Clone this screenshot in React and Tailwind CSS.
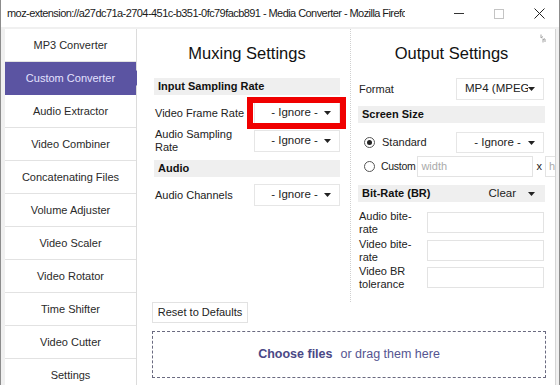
import React from "react";

const F = { fontFamily: '"Liberation Sans", Arial, sans-serif' };

function Arrow() {
  return (
    <svg width="7" height="4" viewBox="0 0 7 4" className="shrink-0">
      <path d="M0 0 L7 0 L3.5 4 Z" fill="#222" />
    </svg>
  );
}

function Select({ text, w = "w-[86px]", h = "h-[22px]", pl = "pl-[10px]" }) {
  return (
    <div className={`${w} ${h} bg-white border border-[#e6e6e6] flex items-center ${pl} pr-[8px] shrink-0`}>
      <span className="flex-1 text-center text-[11.5px] text-[#222] whitespace-nowrap overflow-hidden">{text}</span>
      <Arrow />
    </div>
  );
}

function Header({ children, right }) {
  return (
    <div className="h-[17px] bg-[#efefef] flex items-center pl-[4px] pr-[10px]">
      <span className="font-bold text-[11px] text-[#111] flex-1">{children}</span>
      {right}
    </div>
  );
}

function Input({ w, placeholder }) {
  return (
    <div className={`${w} h-[21px] bg-white border border-[#e3e3e3] flex items-center pl-[3px] text-[11px] text-[#aaa] shrink-0 overflow-hidden whitespace-nowrap`}>
      {placeholder}
    </div>
  );
}

function TwoLine({ a, b, w = "w-[69px]" }) {
  return (
    <div className={`${w} pl-[1px] text-[11px] leading-[12.5px] text-[#222] shrink-0`}>
      {a}
      <br />
      {b}
    </div>
  );
}

export default function App() {
  const items = [
    "MP3 Converter",
    "Custom Converter",
    "Audio Extractor",
    "Video Combiner",
    "Concatenating Files",
    "Volume Adjuster",
    "Video Scaler",
    "Video Rotator",
    "Time Shifter",
    "Video Cutter",
    "Settings",
  ];
  return (
    <div className="w-[560px] h-[385px] overflow-hidden bg-[#f0f0f0] flex flex-col border-l border-r border-[#8c8c8c]" style={F}>
      {/* Title bar */}
      <div className="h-[27px] bg-white flex items-center shrink-0">
        <div className="w-[404px] pl-[6px] overflow-hidden whitespace-nowrap text-[11px] tracking-[-0.56px] text-[#1a1a1a]">
          moz-extension://a27dc71a-2704-451c-b351-0fc79facb891 - Media Converter - Mozilla Firefox
        </div>
        <div className="flex-1 flex items-center justify-end">
          <div className="w-[40px] flex justify-center">
            <div className="w-[10px] h-[1px] bg-[#333]" />
          </div>
          <div className="w-[40px] flex justify-center">
            <div className="w-[10px] h-[10px] border border-[#c4c4c4]" />
          </div>
          <div className="w-[40px] flex justify-center">
            <svg width="11" height="11" viewBox="0 0 11 11">
              <path d="M0.5 0.5 L10.5 10.5 M10.5 0.5 L0.5 10.5" stroke="#222" strokeWidth="1" />
            </svg>
          </div>
        </div>
      </div>

      {/* Body */}
      <div className="flex flex-1 min-h-0 pt-[2px] pl-[4px] pr-[3px]">
        {/* Sidebar */}
        <div className="w-[132px] bg-white border-r border-[#dcdcdc] flex flex-col shrink-0">
          {items.map((it, i) =>
            i === 1 ? (
              <div key={it} className="relative h-[33px] bg-[#5b54a2] flex items-center justify-center shrink-0">
                <span className="text-[11px] text-[#e4e2ff]">{it}</span>
                <svg width="8" height="16" viewBox="0 0 8 16" className="absolute right-[-8px] top-[8px]">
                  <path d="M0 0 L7 8 L0 16 Z" fill="#5b54a2" />
                </svg>
              </div>
            ) : (
              <div key={it} className="h-[33px] border-b border-[#e2e2e2] flex items-center justify-center shrink-0">
                <span className="text-[11px] text-[#2a2a2a]">{it}</span>
              </div>
            )
          )}
        </div>

        {/* Main */}
        <div className="flex-1 min-w-0 bg-white border-r border-[#d4d4d4] flex flex-col relative">
          <svg width="6" height="9" viewBox="0 0 6 9" className="absolute right-[9px] top-[5px]">
            <path d="M1 0.5 L1 4 M1 4 L3 2.5 M3 4.5 L3 8.5 M3 6 L5 4.5 M5 5 L5 8" stroke="#9a9a9a" strokeWidth="0.9" fill="none" />
          </svg>
          <div className="flex">
            {/* Muxing */}
            <div className="w-[214px] border-r border-dotted border-[#d0d0d0] pl-[17px] pr-[10px] shrink-0">
              <div className="pt-[15px] h-[49px] text-center text-[16.5px] leading-[19px] text-[#111]">Muxing Settings</div>
              <Header>Input Sampling Rate</Header>
              <div className="mt-[7px] flex items-center relative">
                <div className="w-[100px] pl-[1px] text-[11px] text-[#222]">Video Frame Rate</div>
                <Select text="- Ignore -" />
                <div className="absolute left-[93px] top-[-5px] w-[99px] h-[32px] border-[6px] border-[#f00000]" />
              </div>
              <div className="mt-[4px] flex items-center h-[25px]">
                <TwoLine a="Audio Sampling" b="Rate" w="w-[100px]" />
                <Select text="- Ignore -" />
              </div>
              <div className="mt-[7px]">
                <Header>Audio</Header>
              </div>
              <div className="mt-[7px] flex items-center">
                <div className="w-[100px] pl-[1px] text-[11px] text-[#222]">Audio Channels</div>
                <Select text="- Ignore -" />
              </div>
            </div>

            {/* Output */}
            <div className="w-[204px] shrink-0 pl-[7px] pr-[10px] overflow-hidden pb-[12px]">
              <div className="pt-[15px] h-[49px] text-center text-[16.5px] leading-[19px] text-[#111]">Output Settings</div>
              <div className="flex items-center">
                <div className="w-[98px] pl-[1px] text-[11px] text-[#222] shrink-0">Format</div>
                <Select text="MP4 (MPEG-4)" w="w-[88px]" pl="pl-[8px]" />
              </div>
              <div className="mt-[6px]">
                <Header>Screen Size</Header>
              </div>
              <div className="mt-[9px] flex items-center">
                <div className="w-[98px] flex items-center pl-[6px] shrink-0">
                  <div className="w-[11px] h-[11px] rounded-full border border-[#555] flex items-center justify-center">
                    <div className="w-[5px] h-[5px] rounded-full bg-[#222]" />
                  </div>
                  <span className="ml-[7px] text-[11px] text-[#222]">Standard</span>
                </div>
                <Select text="- Ignore -" w="w-[88px]" h="h-[21px]" />
              </div>
              <div className="mt-[3px] flex items-center w-[260px]">
                <div className="flex items-center pl-[6px] shrink-0">
                  <div className="w-[11px] h-[11px] rounded-full border border-[#555]" />
                  <span className="ml-[6px] text-[10.5px] text-[#222] tracking-[-0.3px]">Custom</span>
                </div>
                <div className="ml-[2px]">
                  <Input w="w-[116px]" placeholder="width" />
                </div>
                <span className="mx-[3px] text-[11px] text-[#222]">x</span>
                <Input w="w-[40px]" placeholder="height" />
              </div>
              <div className="mt-[8px]">
                <Header
                  right={
                    <div className="flex items-center">
                      <span className="text-[11.5px] text-[#222] mr-[12px]">Clear</span>
                      <Arrow />
                    </div>
                  }
                >
                  Bit-Rate (BR)
                </Header>
              </div>
              <div className="mt-[8px] flex items-center h-[25px]">
                <TwoLine a="Audio bite-" b="rate" />
                <Input w="w-[117px]" />
              </div>
              <div className="mt-[3px] flex items-center h-[25px]">
                <TwoLine a="Video bite-" b="rate" />
                <Input w="w-[117px]" />
              </div>
              <div className="mt-[2px] flex items-center h-[25px]">
                <TwoLine a="Video BR" b="tolerance" />
                <Input w="w-[117px]" />
              </div>
            </div>
          </div>

          {/* Bottom */}
          <div className="pl-[15px] pr-[9px]">
            <div className="w-[96px] h-[21px] border border-[#e2e2e2] flex items-center justify-center text-[11px] text-[#222]">
              Reset to Defaults
            </div>
            <div className="mt-[8px] h-[47px] border border-dashed border-[#6a6a80] flex items-center justify-center text-[12.5px]">
              <span className="font-bold text-[#4a4886]">Choose files</span>
              <span className="ml-[8px] text-[#555591]">or drag them here</span>
            </div>
          </div>
        </div>
      </div>
    </div>
  );
}
